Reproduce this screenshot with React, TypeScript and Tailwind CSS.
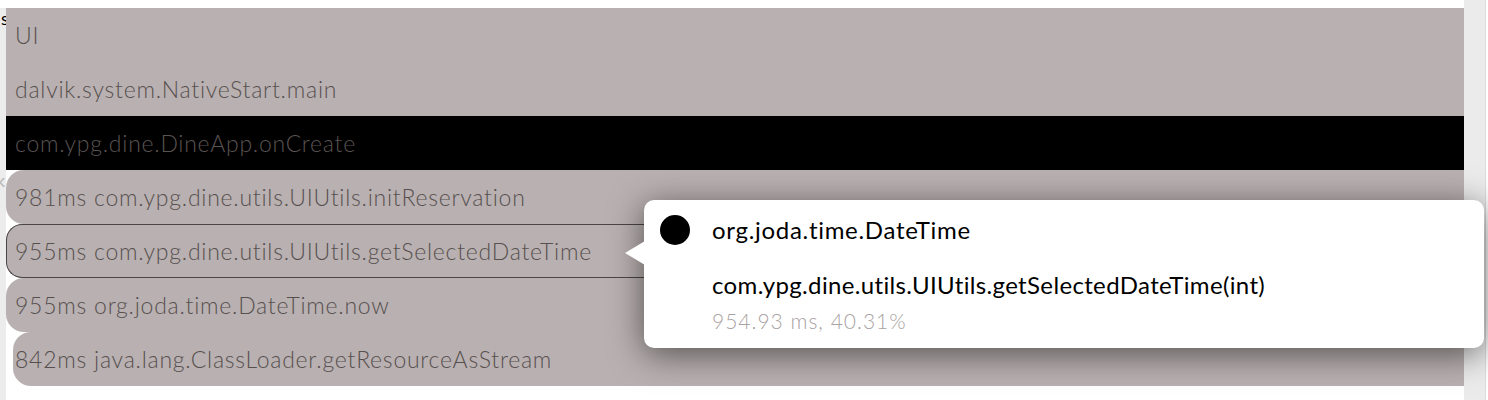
import React from "react";

const font = { fontFamily: "Lato, 'Open Sans', sans-serif" };

function Row({
  label,
  className = "",
}: {
  label: string;
  className?: string;
}) {
  return (
    <div
      className={`h-[54px] flex items-center pl-[9px] text-[23px] font-light tracking-[0.75px] whitespace-nowrap overflow-hidden ${className}`}
    >
      {label}
    </div>
  );
}

export default function App() {
  return (
    <div className="relative w-[1488px] h-[400px] bg-white flex overflow-hidden" style={font}>
      {/* left strip */}
      <div className="w-[6px] mt-[8px] bg-[#ececec] relative overflow-hidden">
        <span className="absolute left-[1px] top-[-2px] text-[18px] leading-[24px] text-black">s</span>
        <span className="absolute left-[-4px] top-[160px] text-[18px] leading-[24px] text-[#b8b8b8]">k</span>
      </div>

      {/* rows */}
      <div className="w-[1458px] pt-[8px] flex flex-col text-[#57504f]">
        <Row label="UI" className="bg-[#b9b0b1]" />
        <Row label="dalvik.system.NativeStart.main" className="bg-[#b9b0b1]" />
        <Row label="com.ypg.dine.DineApp.onCreate" className="bg-black text-[#5a5353]" />
        <Row label="981ms com.ypg.dine.utils.UIUtils.initReservation" className="bg-[#b9b0b1] rounded-l-[18px]" />
        <Row
          label="955ms com.ypg.dine.utils.UIUtils.getSelectedDateTime"
          className="bg-[#b9b0b1] rounded-l-[16px] border border-r-0 border-[#4a4546] !pl-[8px]"
        />
        <Row label="955ms org.joda.time.DateTime.now" className="bg-[#b9b0b1] rounded-l-[18px]" />
        <Row
          label="842ms java.lang.ClassLoader.getResourceAsStream"
          className="bg-[#b9b0b1] rounded-l-[18px] ml-[7px] !pl-[2px]"
        />
      </div>

      {/* right strip */}
      <div className="w-[22px] bg-[#ebebeb] border-r border-[#dcdcdc]" />
      <div className="flex-1 bg-white" />

      {/* tooltip */}
      <div className="absolute left-[644px] top-[200px] w-[840px] h-[148px] bg-white rounded-[10px] shadow-[0_6px_34px_rgba(0,0,0,0.55)]">
        <div className="absolute left-[-19px] top-[41px] w-0 h-0 border-y-[12px] border-y-transparent border-r-[20px] border-r-white" />
        <div className="flex items-center pt-[14px] pl-[16px] h-[46px]">
          <div className="w-[30px] h-[30px] rounded-full bg-black" />
          <span className="ml-[22px] text-[24px] tracking-[0.7px] text-black">org.joda.time.DateTime</span>
        </div>
        <div className="pl-[68px] pt-[24px] text-[24px] tracking-[0.35px] text-black leading-[30px]">
          com.ypg.dine.utils.UIUtils.getSelectedDateTime(int)
        </div>
        <div className="pl-[68px] pt-[8px] text-[21px] font-light tracking-[1px] text-[#a9a2a3] leading-[26px]">
          954.93 ms, 40.31%
        </div>
      </div>
    </div>
  );
}
